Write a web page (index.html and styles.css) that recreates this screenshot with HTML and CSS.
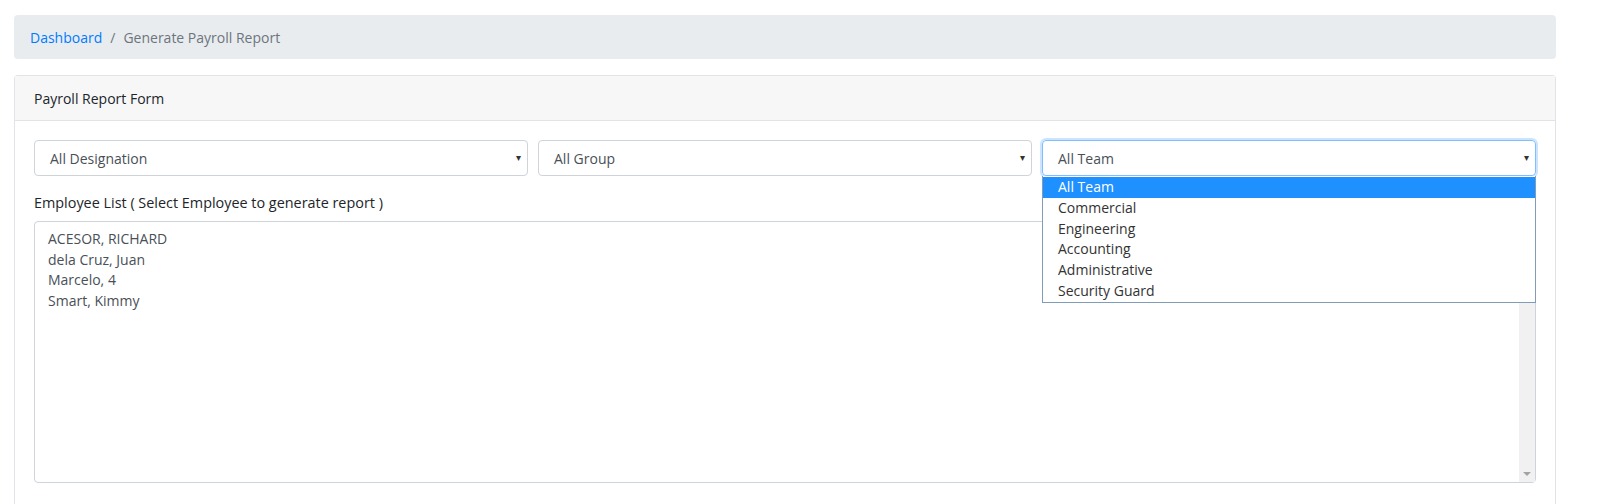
FILE: index.html
```html
<!DOCTYPE html>
<html>
<head>
<meta charset="UTF-8">
<title>Generate Payroll Report</title>
<link rel="stylesheet" href="styles.css">
</head>
<body>

<div class="page">

  <nav class="crumbs">
    <a href="#">Dashboard</a>
    <span class="sep">/</span>
    <span class="current">Generate Payroll Report</span>
  </nav>

  <div class="card">
    <div class="cardHead">Payroll Report Form</div>
    <div class="cardBody">

      <div class="filters">
        <div class="pick">
          <div class="box">All Designation<span class="arrow">&#9662;</span></div>
        </div>
        <div class="pick">
          <div class="box">All Group<span class="arrow">&#9662;</span></div>
        </div>
        <div class="pick open">
          <div class="box">All Team<span class="arrow">&#9662;</span></div>
          <div class="menu">
            <div class="opt active">All Team</div>
            <div class="opt">Commercial</div>
            <div class="opt">Engineering</div>
            <div class="opt">Accounting</div>
            <div class="opt">Administrative</div>
            <div class="opt">Security Guard</div>
          </div>
        </div>
      </div>

      <div class="label">Employee List ( Select Employee to generate report )</div>

      <div class="list">
        <div class="rows">
          <div class="row">ACESOR, RICHARD</div>
          <div class="row">dela Cruz, Juan</div>
          <div class="row">Marcelo, 4</div>
          <div class="row">Smart, Kimmy</div>
        </div>
        <div class="scroll"><span class="down"></span></div>
      </div>

    </div>
  </div>

</div>

</body>
</html>
```

FILE: styles.css
```css
body{
  margin:0;
  background:#fff;
  font-family:"Open Sans", Arial, sans-serif;
  font-size:14px;
  color:#212529;
}

.page{
  width:1542px;
  padding:15px 0 0 14px;
}

.crumbs{
  background:#e9ecef;
  border-radius:4px;
  height:44px;
  display:flex;
  align-items:center;
  padding:0 16px;
  color:#6c757d;
}

.crumbs a{
  color:#007bff;
  text-decoration:none;
}

.sep{
  margin:0 8px;
}

.card{
  margin-top:16px;
  border:1px solid #e1e3e6;
  border-bottom:none;
  border-radius:4px 4px 0 0;
  height:430px;
}

.cardHead{
  background:#f7f7f7;
  border-bottom:1px solid #e1e3e6;
  height:45px;
  display:flex;
  align-items:center;
  padding:0 19px;
  box-sizing:border-box;
}

.cardBody{
  padding:19px 19px 0 19px;
}

.filters{
  display:flex;
  gap:10px;
}

.pick{
  flex:1;
  position:relative;
}

.box{
  height:36px;
  border:1px solid #ced4da;
  border-radius:4px;
  box-sizing:border-box;
  display:flex;
  align-items:center;
  padding:0 15px;
  color:#495057;
  position:relative;
}

.arrow{
  position:absolute;
  right:6px;
  top:9px;
  font-size:10px;
  color:#333;
}

.open .box{
  border-color:#80bdff;
  box-shadow:0 0 0 2px rgba(0,123,255,.2);
}

.menu{
  position:absolute;
  left:0;
  right:0;
  top:36px;
  background:#fff;
  border:1px solid #7f9db9;
  border-top:none;
  z-index:5;
  padding-top:1px;
}

.opt{
  height:20.8px;
  line-height:20.8px;
  padding-left:15px;
  color:#333;
}

.opt.active{
  background:#1e90ff;
  color:#fff;
}

.label{
  margin:17px 0 8px;
  height:20px;
  font-size:14.4px;
}

.list{
  height:262px;
  border:1px solid #ced4da;
  border-radius:4px;
  box-sizing:border-box;
  display:flex;
  color:#495057;
}

.rows{
  flex:1;
  padding:7px 13px;
}

.row{
  height:20.6px;
  line-height:20.6px;
}

.scroll{
  width:16px;
  background:#f1f1f1;
  position:relative;
}

.down{
  position:absolute;
  bottom:6px;
  left:4px;
  border-left:4px solid transparent;
  border-right:4px solid transparent;
  border-top:4px solid #a3a3a3;
}
```
